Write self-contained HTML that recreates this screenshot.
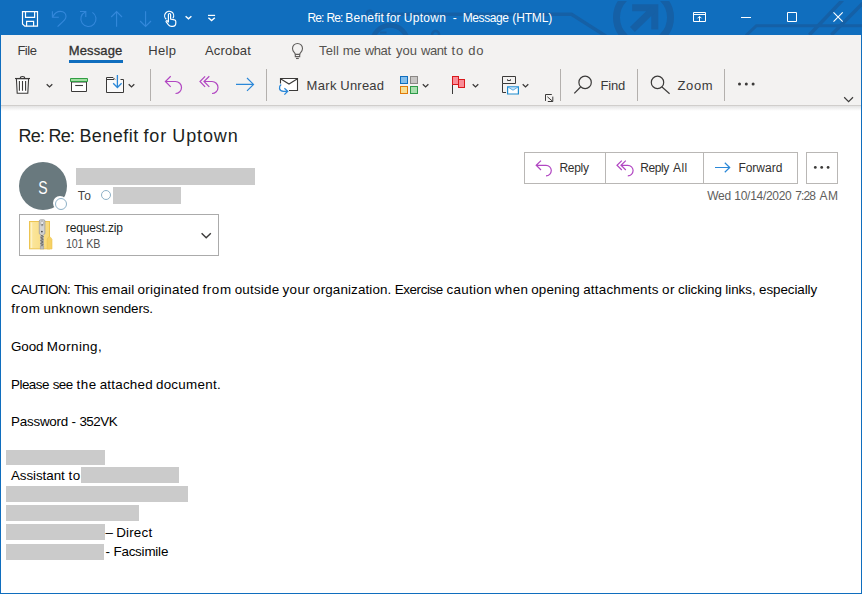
<!DOCTYPE html>
<html><head><meta charset="utf-8">
<style>
*{box-sizing:border-box;margin:0;padding:0}
html,body{width:862px;height:594px;overflow:hidden;background:#fff}
body{font-family:"Liberation Sans",sans-serif;position:relative;color:#000}
.abs{position:absolute}
#title{left:0;top:0;width:862px;height:35px;background:#106ebe}
#ribbon{left:1px;top:35px;width:860px;height:70px;background:#f3f2f1}
#shadow{left:1px;top:105px;width:860px;height:6px;background:linear-gradient(#e4e4e4,#fff);border-top:1px solid #d0cecc}
#bl{left:0;top:35px;width:1px;height:559px;background:#106ebe}
#br{left:861px;top:35px;width:1px;height:559px;background:#106ebe}
#bb{left:0;top:593px;width:862px;height:1px;background:#106ebe}
.t{position:absolute;white-space:nowrap;line-height:1}
.ui{font-size:13px;color:#3b3a39}
.red{position:absolute;background:#cbcbcb}
.body{font-size:13.4px;color:#000}
.ln{height:14px;width:860px}.ln span{position:absolute;top:0;white-space:nowrap}
</style></head><body>
<div id="title" class="abs"></div>
<div id="ribbon" class="abs"></div>
<div id="shadow" class="abs"></div>
<div id="bl" class="abs"></div><div id="br" class="abs"></div><div id="bb" class="abs"></div>


<svg class="abs" style="left:0;top:0" width="862" height="35" viewBox="0 0 862 35" fill="none">
<!-- title bar decoration -->
<defs><linearGradient id="fade" gradientUnits="userSpaceOnUse" x1="538" y1="0" x2="568" y2="0"><stop offset="0" stop-color="#1560a6" stop-opacity="0"/><stop offset="1" stop-color="#1560a6"/></linearGradient></defs>
<g id="deco" stroke="#1560a6" fill="none">
  <circle cx="643.5" cy="17.5" r="27" stroke-width="7"/>
  <path d="M632.2 7.8H654.8V29.6" stroke-width="7" stroke-linejoin="miter"/>
  <path d="M632.4 29.6L653.5 9" stroke-width="7"/>
  <path d="M373.500 14.200H571.500L606 36.200" stroke-width="3.500"/>
  <circle cx="369.800" cy="14" r="3.300" stroke-width="2.400"/>
  <path d="M862 25.7H756.4L746 35.5" stroke-width="3"/>
  <path d="M842.6 0L809.3 35" stroke-width="3.5"/>
  <path d="M866 0L831.3 35" stroke-width="3.5"/>
  <path d="M0 .5H862" stroke="#106ebe" stroke-width="1"/>
  <circle cx="390" cy="43.25" r="17.8" stroke-width="4.8"/>
  <path d="M380 32.500h6.500" stroke-width="2"/>
  <circle cx="435.6" cy="34.500" r="3.500" stroke-width="2.500"/>
</g>
</svg>
<div class="t ln" id="ttl" style="left:0;top:12px;font-size:12px;color:#fff"><span style="left:307.42px;letter-spacing:-0.900px">Re:</span> <span style="left:326.42px;letter-spacing:-0.900px">Re:</span> <span style="left:345.35px;letter-spacing:0.199px">Benefit</span> <span style="left:386.15px;letter-spacing:0.161px">for</span> <span style="left:403.76px;letter-spacing:0.280px">Uptown</span> <span style="left:452.65px;letter-spacing:0.000px">-</span> <span style="left:462.66px;letter-spacing:-0.393px">Message</span> <span style="left:512.33px;letter-spacing:-0.158px">(HTML)</span></div>

<!-- tabs -->
<div class="t ui" id="tFile" style="left:17.42px;letter-spacing:-0.494px;top:44px">File</div>
<div class="t ui" id="tMsg" style="left:68.79px;letter-spacing:0.129px;top:44px;color:#323130;-webkit-text-stroke:0.3px #323130;">Message</div>
<div class="abs" style="left:69px;top:60px;width:54px;height:3px;background:#106ebe"></div>
<div class="t ui" id="tHelp" style="left:148.22px;letter-spacing:0.379px;top:44px">Help</div>
<div class="t ui" id="tAcro" style="left:204.97px;letter-spacing:0.188px;top:44px">Acrobat</div>
<div class="t ui ln" id="tTell" style="left:0;top:44px;color:#55534f"><span style="left:319.03px;letter-spacing:0.110px">Tell</span> <span style="left:342.86px;letter-spacing:-0.290px">me</span> <span style="left:364.76px;letter-spacing:-0.403px">what</span> <span style="left:395.98px;letter-spacing:0.086px">you</span> <span style="left:420.96px;letter-spacing:-0.403px">want</span> <span style="left:451.54px;letter-spacing:0.900px">to</span> <span style="left:468.19px;letter-spacing:0.900px">do</span></div>

<!-- toolbar labels -->
<div class="t ui ln" id="lMark" style="left:0;top:79px"><span style="left:306.52px;letter-spacing:0.341px">Mark</span> <span style="left:340.28px;letter-spacing:0.223px">Unread</span></div>
<div class="t ui" id="lFind" style="left:600.42px;letter-spacing:-0.159px;top:79px">Find</div>
<div class="t ui" id="lZoom" style="left:677.55px;letter-spacing:0.597px;top:79px">Zoom</div>

<!-- subject -->
<div class="t ln" id="subj" style="left:0;top:127.4px;font-size:18px;color:#201f1e"><span style="left:18.62px;letter-spacing:-0.814px">Re:</span> <span style="left:48.52px;letter-spacing:-0.814px">Re:</span> <span style="left:79.40px;letter-spacing:0.473px">Benefit</span> <span style="left:143.47px;letter-spacing:0.900px">for</span> <span style="left:172.26px;letter-spacing:0.900px">Uptown</span></div>

<!-- avatar -->
<div class="abs" style="left:19px;top:162px;width:48px;height:48px;border-radius:24px;background:#69797e"></div>
<div class="t" id="avS" style="left:37px;top:179.6px;width:12px;text-align:center;font-size:17.6px;color:#fff;transform:scaleX(0.8);transform-origin:50% 50%">S</div>
<div class="abs" style="left:53.1px;top:195.9px;width:14px;height:14px;border-radius:7px;background:#fff"></div><div class="abs" style="left:55.2px;top:198px;width:11.7px;height:11.7px;border-radius:6px;background:#fff;border:1.2px solid #8eb1c7"></div>

<div class="red" style="left:76px;top:168px;width:179px;height:17px"></div>
<div class="t" id="to" style="left:77.87px;letter-spacing:0.396px;top:190px;font-size:12px;color:#444">To</div>
<div class="abs" style="left:101.1px;top:190.1px;width:9.8px;height:9.8px;border-radius:5px;border:1.1px solid #8eb1c7;background:#fff"></div>
<div class="red" style="left:113px;top:187px;width:68px;height:17px"></div>

<!-- attachment -->
<div class="abs" style="left:19px;top:214px;width:200px;height:42px;border:1px solid #ababab;background:#fff"></div>
<div class="t" id="att1" style="left:65.83px;letter-spacing:-0.153px;top:222px;font-size:12px;color:#201f1e">request.zip</div>
<div class="t" id="att2" style="left:66.1px;letter-spacing:-0.15px;transform:scaleX(0.89);transform-origin:0 0;top:238px;font-size:12px;color:#505050">101 KB</div>

<!-- reply buttons -->
<div class="abs" style="left:524px;top:152px;width:274px;height:32px;border:1px solid #b9b7b5;background:#fff"></div>
<div class="abs" style="left:605px;top:152px;width:1px;height:32px;background:#b9b7b5"></div>
<div class="abs" style="left:703px;top:152px;width:1px;height:32px;background:#b9b7b5"></div>
<div class="abs" style="left:806px;top:152px;width:32px;height:32px;border:1px solid #b9b7b5;background:#fff"></div>
<div class="t" id="bReply" style="left:559.48px;letter-spacing:-0.301px;top:162px;font-size:12px;color:#323130">Reply</div>
<div class="t ln" id="bReplyAll" style="left:0;top:162px;font-size:12px;color:#323130"><span style="left:640.13px;letter-spacing:-0.382px">Reply</span> <span style="left:673.02px;letter-spacing:0.453px">All</span></div>
<div class="t" id="bFwd" style="left:738.38px;letter-spacing:-0.014px;top:162px;font-size:12px;color:#323130">Forward</div>
<div class="t ln" id="date" style="left:0;top:190px;font-size:12px;color:#605e5c"><span style="left:707.28px;letter-spacing:-0.320px">Wed</span> <span style="left:734.37px;letter-spacing:-0.299px">10/14/2020</span> <span style="left:795.26px;letter-spacing:-0.900px">7:28</span> <span style="left:819.49px;letter-spacing:0.486px">AM</span></div>

<!-- body -->
<div class="t body ln" id="b1" style="left:0;top:283px"><span style="left:11.00px;letter-spacing:-0.599px">CAUTION:</span> <span style="left:74.12px;letter-spacing:-0.435px">This</span> <span style="left:101.45px;letter-spacing:0.211px">email</span> <span style="left:137.61px;letter-spacing:0.271px">originated</span> <span style="left:202.42px;letter-spacing:0.620px">from</span> <span style="left:234.63px;letter-spacing:0.228px">outside</span> <span style="left:282.51px;letter-spacing:0.396px">your</span> <span style="left:313.08px;letter-spacing:0.131px">organization.</span> <span style="left:394.67px;letter-spacing:-0.389px">Exercise</span> <span style="left:446.62px;letter-spacing:0.260px">caution</span> <span style="left:494.70px;letter-spacing:0.417px">when</span> <span style="left:531.28px;letter-spacing:0.142px">opening</span> <span style="left:583.13px;letter-spacing:0.236px">attachments</span> <span style="left:661.94px;letter-spacing:0.620px">or</span> <span style="left:677.97px;letter-spacing:-0.005px">clicking</span> <span style="left:725.17px;letter-spacing:0.010px">links,</span> <span style="left:759.06px;letter-spacing:-0.076px">especially</span></div>
<div class="t body ln" id="b2" style="left:0;top:302px"><span style="left:11.22px;letter-spacing:0.620px">from</span> <span style="left:43.43px;letter-spacing:0.370px">unknown</span> <span style="left:102.58px;letter-spacing:-0.136px">senders.</span></div>
<div class="t body ln" id="b3" style="left:0;top:340px"><span style="left:11.00px;letter-spacing:-0.089px">Good</span> <span style="left:46.82px;letter-spacing:0.391px">Morning,</span></div>
<div class="t body ln" id="b4" style="left:0;top:378px"><span style="left:11.00px;letter-spacing:-0.514px">Please</span> <span style="left:52.71px;letter-spacing:-0.609px">see</span> <span style="left:76.45px;letter-spacing:0.620px">the</span> <span style="left:99.69px;letter-spacing:0.218px">attached</span> <span style="left:155.92px;letter-spacing:0.287px">document.</span></div>
<div class="t body ln" id="b5" style="left:0;top:415px"><span style="left:11.00px;letter-spacing:-0.223px">Password</span> <span style="left:71.58px;letter-spacing:0.000px">-</span> <span style="left:79.38px;letter-spacing:-0.473px">352VK</span></div>
<div class="red" style="left:6px;top:450px;width:99px;height:15px"></div>
<div class="t body ln" id="b6" style="left:0;top:469px"><span style="left:11.00px;letter-spacing:-0.074px">Assistant</span> <span style="left:68.50px;letter-spacing:0.620px">to</span></div>
<div class="red" style="left:81px;top:467px;width:98px;height:16px"></div>
<div class="red" style="left:6px;top:486px;width:182px;height:16px"></div>
<div class="red" style="left:6px;top:505px;width:133px;height:16px"></div>
<div class="red" style="left:6px;top:524px;width:99px;height:16px"></div>
<div class="t body ln" id="b7" style="left:0;top:526px"><span style="left:105.43px;letter-spacing:0.000px">–</span> <span style="left:116.14px;letter-spacing:0.205px">Direct</span></div>
<div class="red" style="left:6px;top:544px;width:98px;height:16px"></div>
<div class="t body ln" id="b8" style="left:0;top:545px"><span style="left:105.62px;letter-spacing:0.000px">-</span> <span style="left:113.42px;letter-spacing:-0.202px">Facsimile</span></div>

<svg class="abs" style="left:0;top:0" width="862" height="594" viewBox="0 0 862 594" fill="none" stroke-linecap="butt" stroke-linejoin="miter">
<!-- QAT icons -->
<g stroke="#fff" stroke-width="1.2">
  <path d="M22.5 11.6H37.5V26.2H24.8L22.5 23.9Z"/>
  <path d="M25.5 11.6V17.4H34.6V11.6"/>
  <path d="M26.6 26.2V21.4H33.6V26.2"/>
</g>
<g stroke="#3488db" stroke-width="1.1">
  <path d="M52.4 11.2V17.3H58.8"/>
  <path d="M52.8 17C54.5 13.2 57.3 11.4 60.5 11.4C64 11.4 66 13.8 66 16.6C66 18.8 65 20 57.6 26.6"/>
  <path d="M80 11.5H85.8V17"/>
  <path d="M85.4 11.9A7.6 7.6 0 1 0 92.4 12.4" />
  <path d="M116.6 26.8V11.8M111.2 17L116.6 11.6L122 17"/>
  <path d="M145.6 11.2V26.2M140.1 21L145.6 26.5L151 21"/>
</g>
<g stroke="#fff" stroke-width="1.2">
  <!-- touch -->
  <path d="M166.3 19.3A4.5 4.5 0 1 1 173 18.2"/>
  <path d="M168.4 22.5V14.6a1.1 1.1 0 0 1 2.2 0V19l3.8 .8c1 .2 1.4 .8 1.4 1.6V23c0 2-1.300 3.400-3.200 3.400h-1.200c-1.300 0-2.100-.5-2.900-1.500l-2.300-3c-.5-.7 .4-1.600 1.100-1l1.100 1.100"/>
  <path d="M185.6 16.2L188.5 18.8L191.4 16.2" stroke-width="1.4"/>
  <path d="M208 15.4H215.100" stroke-width="1.2"/>
  <path d="M208.400 17.800L211.600 20.600L214.800 17.800" stroke-width="1.4"/>
  <!-- ribbon display -->
  <path d="M693.5 12.500H705.500V21.500H693.500Z M693.500 14.500H705.500 M699.500 21.500V16.500 M697.500 18.300L699.500 16.300L701.500 18.300" stroke-width="1"/>
  <!-- min / max / close -->
  <path d="M741 17.500H751" stroke-width="1"/>
  <path d="M787.500 12.500H796.500V21.500H787.500Z" stroke-width="1"/>
  <path d="M833.500 12.300L842.700 21.700M842.700 12.300L833.500 21.700" stroke-width="1.1"/>
</g>
<!-- lightbulb -->
<g stroke="#605e5c" stroke-width="1.1">
  <path d="M295.300 54.400C295.300 52.600 292.500 51.600 292.500 48.500A5 5 0 0 1 302.500 48.500C302.500 51.600 299.700 52.600 299.700 54.400Z"/>
  <path d="M295.300 54.400V56.600H299.700V54.400"/>
  <path d="M296 58.500H298.800"/>
</g>
<!-- toolbar separators -->
<g stroke="#b3b0ad" stroke-width="1">
  <path d="M150.500 69V101M266.500 69V101M560.500 69V101M637.500 69V101M724.500 69V101"/>
</g>
<!-- trash -->
<g stroke="#3b3a39" stroke-width="1.1">
  <path d="M16.400 78.600L17.200 93.200H27.800L28.600 78.600Z" fill="#fff"/>
  <path d="M15 78.500H30"/>
  <path d="M20.300 78.400C20.300 75.900 24.700 75.900 24.700 78.400"/>
  <path d="M19.400 81V90.800M22.500 81V90.800M25.600 81V90.800"/>
</g>
<g stroke="#3b3a39" stroke-width="1.300">
  <path d="M46.700 84.200L49.500 86.900L52.300 84.200"/>
  <path d="M128.700 84.200L131.500 86.900L134.300 84.200"/>
  <path d="M422.800 84.200L425.600 86.900L428.400 84.200"/>
  <path d="M472.700 84.200L475.500 86.900L478.300 84.200"/>
  <path d="M522.700 84.200L525.500 86.900L528.300 84.200"/>
  <path d="M844.200 97.300L848.600 101.600L853 97.300" stroke-width="1.200"/>
  <path d="M201.600 233.200L206.200 237.800L210.800 233.200" stroke-width="1.400"/>
</g>
<!-- archive -->
<path d="M71.500 82H86.500V91.500H71.500Z" fill="#fff" stroke="#3b3a39" stroke-width="1"/>
<path d="M70.500 78.500H87.500V81.500H70.500Z" fill="#a1dda1" stroke="#309e43" stroke-width="1"/>
<path d="M75.200 85.500H83" stroke="#3b3a39" stroke-width="1.100"/>
<!-- move -->
<path d="M106.500 77.500H113L115 79.500H123.500V92.500H106.500Z" fill="#fafafa" stroke="none"/>
<path d="M114 79.500H106.500M120.500 79.500H123.500V92.500H106.500V77.500H113L115 79.500" stroke="#3b3a39" stroke-width="1"/>
<path d="M117.400 75V87.200M113.200 83.300L117.400 87.500L121.600 83.300" stroke="#2b88d8" stroke-width="1.300"/>
<!-- reply / reply all / forward (toolbar) -->
<g stroke="#b146c2" stroke-width="1.200">
  <path d="M170.700 76.300L165.400 81.500L170.700 86.800M165.600 81.500H175.500A6 6 0 0 1 175.500 93.500"/>
  <path d="M205.100 76.300L200 81.500L205.100 86.800M209.300 76.300L204 81.500L209.300 86.800M204.200 81.500H212A6 6 0 0 1 212 93.500"/>
</g>
<path d="M236 84.400H253.300M247 78L253.500 84.400L247 90.900" stroke="#2b88d8" stroke-width="1.200"/>
<!-- mark unread -->
<path d="M280.500 78.500H297.500V90.500H280.500Z" fill="#fff" stroke="none"/>
<path d="M280.500 83.500V78.500H297.500V90.500H289M280.500 78.800L289 84L297.500 78.800" stroke="#3b3a39" stroke-width="1.100"/>
<path d="M281.200 84.600C278.600 86.500 278.600 91.300 283.500 91.300H287.500M284.400 88.200L287.700 91.300L284.400 94.600" stroke="#2b88d8" stroke-width="1.300"/>
<!-- categorize -->
<rect x="400.500" y="76.500" width="7" height="7" fill="#83beec" stroke="#106ebe"/>
<rect x="410.500" y="76.500" width="7" height="7" fill="#c8c6c4" stroke="#8a8886"/>
<rect x="400.500" y="86.500" width="7" height="7" fill="#f8df94" stroke="#e07a0a"/>
<rect x="410.500" y="86.500" width="7" height="7" fill="#a7dfae" stroke="#2d9a48"/>
<!-- flag -->
<path d="M452.500 84V94" stroke="#3b3a39" stroke-width="1"/>
<rect x="452.500" y="76.500" width="6" height="8" fill="#f98d98" stroke="#d9191c"/>
<rect x="458.500" y="79.500" width="6" height="8" fill="#f98d98" stroke="#d9191c"/>
<!-- rules -->
<path d="M502.500 76.500H515.500V83.500H502.500ZM502.500 83.500V92.500H506M507.500 79.300V80.500H510.500V79.300" stroke="#3b3a39" stroke-width="1"/>
<path d="M507.600 86.800H518.400V94H507.600Z" fill="#fff" stroke="#1e8bcd" stroke-width="1.200"/>
<path d="M507.600 86.800L513 90.200L518.400 86.800Z" fill="#c5e2f6" stroke="#4aa3df" stroke-width=".9"/>
<!-- dialog launcher -->
<path d="M551.800 94.500H545.500V100.900M547.400 96.800L552.600 101.300M552.800 96.600V101.500H547.800" stroke="#3b3a39" stroke-width="1"/>
<!-- find / zoom -->
<g stroke="#3b3a39" stroke-width="1.200">
  <circle cx="585.100" cy="82.400" r="6.200"/>
  <path d="M580.600 87L574.300 93.400"/>
  <circle cx="657.500" cy="82.400" r="6.200"/>
  <path d="M662 87L669.600 93.800"/>
</g>
<g fill="#3b3a39" stroke="none">
  <circle cx="739.500" cy="84" r="1.500"/><circle cx="746.300" cy="84" r="1.500"/><circle cx="753.100" cy="84" r="1.500"/>
  <circle cx="815.300" cy="167.400" r="1.400"/><circle cx="821.700" cy="167.400" r="1.400"/><circle cx="828.100" cy="167.400" r="1.400"/>
</g>
<!-- header reply icons -->
<g stroke="#b146c2" stroke-width="1.200">
  <path d="M541 160.600L536.200 165.300L541 170M536.400 165.300H546A5.300 5.300 0 0 1 546 175.900"/>
  <path d="M621.800 160.600L617 165.300L621.800 170M625.800 160.600L621 165.300L625.800 170M621.200 165.300H627.800A5.300 5.300 0 0 1 627.800 175.900"/>
</g>
<path d="M715 167.500H729.500M724.800 162.800L729.700 167.500L724.800 172.300" stroke="#2b88d8" stroke-width="1.200"/>
<!-- zip icon -->
<g>
  <defs><linearGradient id="zg" x1="0" y1="0" x2="1" y2="0"><stop offset="0" stop-color="#fbe7a0"/><stop offset="1" stop-color="#f8d978"/></linearGradient></defs>
  <rect x="29.500" y="221.500" width="20" height="27.300" fill="url(#zg)" stroke="#ecc452" stroke-width="1"/>
  <path d="M31.600 222.500V248" stroke="#fdf2c6" stroke-width="1.200"/>
  <path d="M47.200 249V239L48.800 236.700H50L52 239.200V249Z" fill="#f6d164" stroke="#ecc452" stroke-width=".6"/>
  <rect x="39.300" y="219.800" width="5.600" height="14.600" rx="1.200" fill="#d4d4d4" stroke="#9a9a9a" stroke-width=".8"/>
  <rect x="40.900" y="221.200" width="2.400" height="4.600" rx="1" fill="#f2f2f2" stroke="#8a8a8a" stroke-width=".5"/>
  <rect x="41.300" y="224.300" width="1.700" height="1" fill="#555"/>
  <circle cx="41.900" cy="231.600" r=".9" fill="#444"/>
  <path d="M40.300 234.500H43.700V246H40.300Z" fill="#f4f4f4"/>
  <path d="M40.500 235L43.500 236.400L40.500 237.800L43.500 239.200L40.500 240.600L43.500 242L40.500 243.400L43.500 244.800L40.500 246.200" stroke="#555" stroke-width=".9" fill="none"/>
  <path d="M43.500 235L40.500 236.400L43.500 237.800L40.500 239.200L43.500 240.600L40.500 242L43.500 243.400L40.500 244.800L43.500 246.200" stroke="#777" stroke-width=".7" fill="none"/>
  <rect x="40.200" y="246" width="3.600" height="3" fill="#bdbdbd" stroke="#999" stroke-width=".5"/>
</g>
</svg>
</body></html>
